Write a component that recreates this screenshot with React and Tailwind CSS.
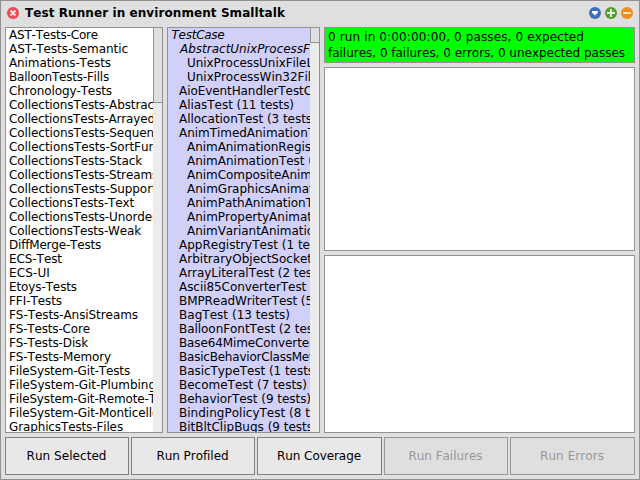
import React from "react";

const suites = [
  "AST-Tests-Core",
  "AST-Tests-Semantic",
  "Animations-Tests",
  "BalloonTests-Fills",
  "Chronology-Tests",
  "CollectionsTests-Abstract",
  "CollectionsTests-Arrayed",
  "CollectionsTests-Sequenceable",
  "CollectionsTests-SortFunctions",
  "CollectionsTests-Stack",
  "CollectionsTests-Streams",
  "CollectionsTests-Support",
  "CollectionsTests-Text",
  "CollectionsTests-Unordered",
  "CollectionsTests-Weak",
  "DiffMerge-Tests",
  "ECS-Test",
  "ECS-UI",
  "Etoys-Tests",
  "FFI-Tests",
  "FS-Tests-AnsiStreams",
  "FS-Tests-Core",
  "FS-Tests-Disk",
  "FS-Tests-Memory",
  "FileSystem-Git-Tests",
  "FileSystem-Git-Plumbing",
  "FileSystem-Git-Remote-Tests",
  "FileSystem-Git-Monticello",
  "GraphicsTests-Files",
];

const testCases = [
  { name: "TestCase", depth: 0, abstract: true },
  { name: "AbstractUnixProcessFileTest", depth: 1, abstract: true },
  { name: "UnixProcessUnixFileLockingTestCase", depth: 2 },
  { name: "UnixProcessWin32FileLockingTestCase", depth: 2 },
  { name: "AioEventHandlerTestCase", depth: 1 },
  { name: "AliasTest (11 tests)", depth: 1 },
  { name: "AllocationTest (3 tests)", depth: 1 },
  { name: "AnimTimedAnimationTest", depth: 1 },
  { name: "AnimAnimationRegistryTest", depth: 2 },
  { name: "AnimAnimationTest (8 tests)", depth: 2 },
  { name: "AnimCompositeAnimationTest", depth: 2 },
  { name: "AnimGraphicsAnimationTest", depth: 2 },
  { name: "AnimPathAnimationTest", depth: 2 },
  { name: "AnimPropertyAnimationTest", depth: 2 },
  { name: "AnimVariantAnimationTest", depth: 2 },
  { name: "AppRegistryTest (1 tests)", depth: 1 },
  { name: "ArbitraryObjectSocketTestCase", depth: 1 },
  { name: "ArrayLiteralTest (2 tests)", depth: 1 },
  { name: "Ascii85ConverterTest (7 tests)", depth: 1 },
  { name: "BMPReadWriterTest (5 tests)", depth: 1 },
  { name: "BagTest (13 tests)", depth: 1 },
  { name: "BalloonFontTest (2 tests)", depth: 1 },
  { name: "Base64MimeConverterTest", depth: 1 },
  { name: "BasicBehaviorClassMetaclassTest", depth: 1 },
  { name: "BasicTypeTest (1 tests)", depth: 1 },
  { name: "BecomeTest (7 tests)", depth: 1 },
  { name: "BehaviorTest (9 tests)", depth: 1 },
  { name: "BindingPolicyTest (8 tests)", depth: 1 },
  { name: "BitBltClipBugs (9 tests)", depth: 1 },
];

const indents = ["pl-[3px]", "pl-[11px]", "pl-[19px]"];
const italicIndents = ["pl-[3.5px]", "pl-[12px]"];

const buttons = [
  { label: "Run Selected", width: "w-[124px]", enabled: true },
  { label: "Run Profiled", width: "w-[124px]", enabled: true },
  { label: "Run Coverage", width: "w-[125px]", enabled: true },
  { label: "Run Failures", width: "w-[124px]", enabled: false },
  { label: "Run Errors", width: "w-[125px]", enabled: false },
];

const measureContext = document.createElement("canvas").getContext("2d");

// Bitmap-style fonts advance by whole pixels; spread that rounding over the
// part of the string that fits its column.
function pixelTracking(text, style, fit) {
  measureContext.font = `${style} 12px "DejaVu Sans"`;
  let drift = 0;
  let width = 0;
  let count = 0;
  for (const char of text) {
    if (width >= fit) break;
    const advance = measureContext.measureText(char).width;
    drift += Math.round(advance) - advance;
    width += advance;
    count += 1;
  }
  return drift / count;
}

function Label({ text, style = "", fit = Infinity }) {
  return (
    <span
      className="[font-kerning:none] [font-variant-ligatures:none]"
      style={{ letterSpacing: `${pixelTracking(text, style, fit)}px` }}
    >
      {text}
    </span>
  );
}

function RoundIcon({ color, children }) {
  return (
    <svg className="block size-3 shrink-0" viewBox="0 0 12 12" fill="none">
      <circle cx="6" cy="6" r="6" fill={color} />
      {children}
    </svg>
  );
}

function Scrollbar({ thumb }) {
  return (
    <div className="w-[9px] shrink-0 bg-[#ececec]">
      <div className={`border-b border-l border-[#919191] bg-[#dfdfdf] ${thumb}`} />
    </div>
  );
}

function TitleBar() {
  return (
    <header className="flex h-[26px] shrink-0 items-center px-[2px] pb-[2px]">
      <RoundIcon color="#e84b55">
        <path d="M3.5 3.5l5 5M8.5 3.5l-5 5" stroke="#fbe6e7" strokeWidth="1.9" />
      </RoundIcon>
      <h1 className="ml-[6px] text-[12px] leading-[14px] font-bold">
        <Label text="Test Runner in environment Smalltalk" style="bold" />
      </h1>
      <div className="ml-auto flex gap-1">
        <RoundIcon color="#3f6fb9">
          <path d="M3 4h6v1.5L6 8.5 3 5.5z" fill="#fff" />
        </RoundIcon>
        <RoundIcon color="#559f2f">
          <path d="M6 2v8M2 6h8" stroke="#e6f2df" strokeWidth="1.8" />
        </RoundIcon>
        <RoundIcon color="#f08a1b">
          <path d="M2 6h8" stroke="#fdebd5" strokeWidth="1.8" />
        </RoundIcon>
      </div>
    </header>
  );
}

export default function App() {
  return (
    <div className="flex h-[480px] w-[640px] flex-col overflow-hidden border border-[#919191] bg-[#dfdfdf] px-1 font-['DejaVu_Sans',sans-serif] text-[12px] leading-[14px] text-black">
      <TitleBar />
      <main className="flex h-[406px] shrink-0">
        <section className="flex w-[158px] shrink-0 border border-[#919191] bg-white">
          <ul className="min-w-0 flex-1 overflow-hidden pl-[3px] whitespace-nowrap">
            {suites.map((name) => (
              <li key={name} className="h-[14px]">
                <Label text={name} fit={144} />
              </li>
            ))}
          </ul>
          <Scrollbar thumb="h-[75px]" />
        </section>
        <section className="ml-1 flex w-[153px] shrink-0 border border-[#919191] bg-[#d0d0f9]">
          <ul className="min-w-0 flex-1 overflow-hidden whitespace-nowrap">
            {testCases.map(({ name, depth, abstract }) => (
              <li
                key={name}
                className={`h-[14px] ${abstract ? `italic ${italicIndents[depth]}` : indents[depth]}`}
              >
                <Label text={name} style={abstract ? "italic" : ""} fit={depth === 2 ? 122 : 130} />
              </li>
            ))}
          </ul>
          <Scrollbar thumb="h-[15px]" />
        </section>
        <section className="ml-1 flex w-[311px] shrink-0 flex-col gap-1">
          <div className="h-9 shrink-0 border border-[#919191] bg-[#00ff00] pt-px pl-[3px] leading-[16px] whitespace-nowrap">
            <p>
              <Label text="0 run in 0:00:00:00, 0 passes, 0 expected" />
            </p>
            <p>
              <Label text="failures, 0 failures, 0 errors, 0 unexpected passes" />
            </p>
          </div>
          <div className="h-[184px] shrink-0 border border-[#919191] bg-white" />
          <div className="flex-1 border border-[#919191] bg-white" />
        </section>
      </main>
      <footer className="mt-1 flex h-[38px] shrink-0 gap-[2px]">
        {buttons.map(({ label, width, enabled }) => (
          <button
            key={label}
            disabled={!enabled}
            className={`shrink-0 border pr-px ${width} ${
              enabled
                ? "border-[#808080] bg-[#e8e8e8] text-black"
                : "border-[#989898] bg-[#dfdfdf] text-[#989898]"
            }`}
          >
            <Label text={label} />
          </button>
        ))}
      </footer>
    </div>
  );
}
